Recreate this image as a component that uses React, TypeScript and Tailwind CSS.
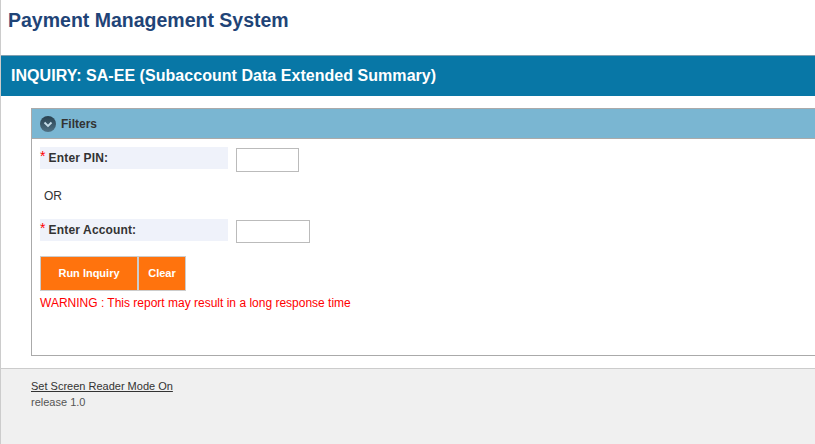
export default function App() {
  return (
    <div className="h-[444px] w-[815px] overflow-hidden border-l border-[#cccccc] bg-white font-['Liberation_Sans',Arial,sans-serif]">
      <div className="flex h-[55px] items-start px-[7px] pt-[9px]">
        <h1 className="text-[19.5px] leading-[23px] font-bold text-[#1f4477]">Payment Management System</h1>
      </div>
      <div className="flex h-[41px] items-center border-t border-[#7f9fb0] bg-[#0877a6] pl-[10px]">
        <h2 className="text-[16px] font-bold tracking-[0.04px] text-white">INQUIRY: SA-EE (Subaccount Data Extended Summary)</h2>
      </div>
      <div className="h-[272px] pt-[12px] pl-[30px]">
        <section className="h-[248px] border border-r-0 border-[#aaaaaa]">
          <div className="flex h-[30px] items-center gap-[5px] border-b border-[#aaaaaa] bg-[#7ab6d2] pl-[8px]">
            <svg width="16" height="16" viewBox="0 0 16 16">
              <defs>
                <linearGradient id="filterIcon" x1="0" y1="0" x2="0" y2="1">
                  <stop offset="0" stopColor="#27404f" />
                  <stop offset="1" stopColor="#4f7184" />
                </linearGradient>
              </defs>
              <circle cx="8" cy="8" r="8" fill="url(#filterIcon)" />
              <path d="M4.5 6.5 8 10l3.5-3.5" fill="none" stroke="#c5dce8" strokeWidth="1.8" />
            </svg>
            <span className="text-[12px] font-bold text-[#333333]">Filters</span>
          </div>
          <div className="pt-[8px] pl-[8px]">
            <div className="flex items-start gap-[8px]">
              <label className="flex h-[22px] w-[188px] items-center bg-[#eff2fa] text-[12px] font-bold tracking-[0.15px] text-[#333333]">
                <span className="mr-[3px] -translate-y-[2px] text-[14px] leading-none font-normal text-[#ff0000]">*</span>Enter PIN:
              </label>
              <input className="mt-px h-[24px] w-[63px] border border-[#bbbbbb] bg-white" />
            </div>
            <p className="mt-[17px] ml-[4px] text-[12px] leading-[14px] text-[#333333]">OR</p>
            <div className="mt-[16px] flex items-start gap-[8px]">
              <label className="flex h-[22px] w-[188px] items-center bg-[#eff2fa] text-[12px] font-bold tracking-[0.15px] text-[#333333]">
                <span className="mr-[3px] -translate-y-[2px] text-[14px] leading-none font-normal text-[#ff0000]">*</span>Enter Account:
              </label>
              <input className="mt-px h-[23px] w-[74px] border border-[#bbbbbb] bg-white" />
            </div>
            <div className="mt-[13px] flex h-[35px]">
              <button className="h-full w-[98px] border border-[#cccccc] bg-[#ff730d] text-[11px] font-bold text-white">Run Inquiry</button>
              <button className="h-full w-[48px] border border-[#cccccc] bg-[#ff730d] text-[11px] font-bold text-white">Clear</button>
            </div>
            <p className="mt-[5px] text-[12px] leading-[14px] text-[#ff0000]">WARNING : This report may result in a long response time</p>
          </div>
        </section>
      </div>
      <footer className="h-[76px] border-t border-[#cccccc] bg-[#f0f0f0] pt-[10px] pl-[30px] text-[11px] leading-[15px]">
        <a href="#" className="block text-[#333333] underline">Set Screen Reader Mode On</a>
        <p className="mt-px text-[#555555]">release 1.0</p>
      </footer>
    </div>
  );
}
